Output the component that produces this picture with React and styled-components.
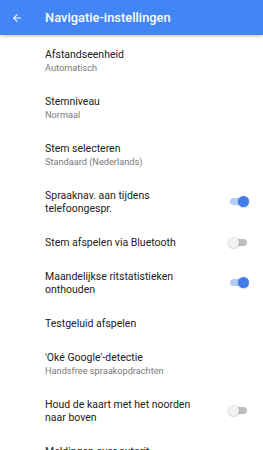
import styled, { createGlobalStyle } from "styled-components";

const Global = createGlobalStyle`
  html, body { margin: 0; padding: 0; background: #ffffff; }
  body { font-family: Roboto, "Noto Sans", Arial, sans-serif; }
`;

const Page = styled.div`
  width: 263px;
  height: 450px;
  overflow: hidden;
  background: #ffffff;
`;

const Header = styled.div`
  height: 35px;
  background: #4285f4;
  display: flex;
  align-items: center;
  box-shadow: 0 1px 3px rgba(0, 0, 0, 0.25);
  position: relative;
  z-index: 1;
`;

const Back = styled.div`
  width: 45px;
  display: flex;
  justify-content: center;
  padding-right: 12px;
  box-sizing: border-box;
`;

const Title = styled.div`
  color: #ffffff;
  font-size: 12.8px;
  font-weight: 500;
  letter-spacing: 0.05px;
`;

const List = styled.div`
  padding-top: 2px;
`;

const Row = styled.div`
  display: flex;
  align-items: center;
  padding: 10.5px 16px 10.5px 45px;
`;

const Texts = styled.div`
  flex: 1;
  min-width: 0;
`;

const Label = styled.div`
  color: #212121;
  font-size: 10.5px;
  line-height: 13px;
  padding-right: 20px;
`;

const Sub = styled.div`
  color: #7a7a7a;
  font-size: 9.2px;
  line-height: 13px;
`;

const Track = styled.div`
  width: 17px;
  height: 7px;
  border-radius: 4px;
  background: ${(p) => (p.on ? "#b4cdf8" : "#bdbdbd")};
  display: flex;
  align-items: center;
  justify-content: ${(p) => (p.on ? "flex-end" : "flex-start")};
  flex-shrink: 0;
`;

const Thumb = styled.div`
  width: 11px;
  height: 11px;
  border-radius: 50%;
  background: ${(p) => (p.on ? "#3f7ee8" : "#f1f1f1")};
  box-shadow: 0 0.5px 1.5px rgba(0, 0, 0, 0.3);
  margin: ${(p) => (p.on ? "0 -2px 0 0" : "0 0 0 -2px")};
`;

const Toggle = ({ on }) => (
  <Track on={on ? 1 : 0}>
    <Thumb on={on ? 1 : 0} />
  </Track>
);

const items = [
  { label: "Afstandseenheid", sub: "Automatisch" },
  { label: "Stemniveau", sub: "Normaal" },
  { label: "Stem selecteren", sub: "Standaard (Nederlands)" },
  { label: "Spraaknav. aan tijdens telefoongespr.", toggle: true, on: true },
  { label: "Stem afspelen via Bluetooth", toggle: true, on: false },
  { label: "Maandelijkse ritstatistieken onthouden", toggle: true, on: true },
  { label: "Testgeluid afspelen" },
  { label: "'Oké Google'-detectie", sub: "Handsfree spraakopdrachten" },
  { label: "Houd de kaart met het noorden naar boven", toggle: true, on: false },
  { label: "Meldingen over autorit" },
];

export default function App() {
  return (
    <Page>
      <Global />
      <Header>
        <Back>
          <svg width="12" height="12" viewBox="0 0 24 24" fill="#ffffff">
            <path d="M20 11H7.83l5.59-5.59L12 4l-8 8 8 8 1.41-1.41L7.83 13H20v-2z" />
          </svg>
        </Back>
        <Title>Navigatie-instellingen</Title>
      </Header>
      <List>
        {items.map((it, i) => (
          <Row key={i}>
            <Texts>
              <Label>{it.label}</Label>
              {it.sub && <Sub>{it.sub}</Sub>}
            </Texts>
            {it.toggle && <Toggle on={it.on} />}
          </Row>
        ))}
      </List>
    </Page>
  );
}
